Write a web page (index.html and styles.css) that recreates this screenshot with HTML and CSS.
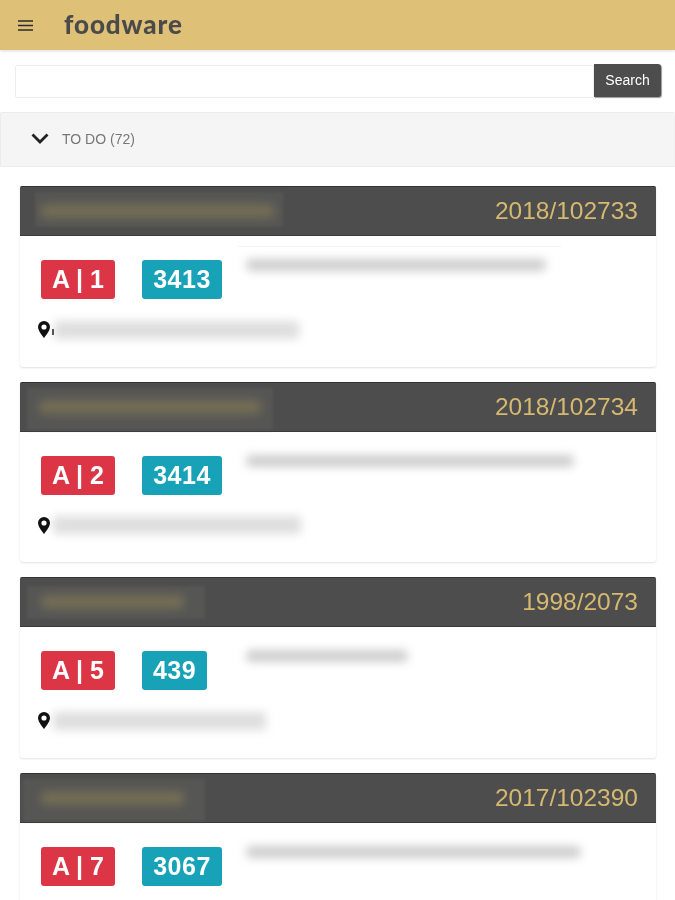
FILE: index.html
```html
<!DOCTYPE html>
<html lang="en">
<head>
    <meta charset="UTF-8">
    <meta name="viewport" content="width=device-width, initial-scale=1.0">
    <title>Foodware</title>
    <link rel="stylesheet" href="styles.css">
</head>
<body>
    <header class="topbar">
        <svg class="menu-icon" width="15" height="11" viewBox="0 0 15 11">
            <path d="M0 1h15M0 5.5h15M0 10h15" stroke="#2b2b2b" stroke-width="1.5" fill="none"/>
        </svg>
        <span class="logo soft">foodware</span>
    </header>

    <div class="search-row">
        <input class="search-input" type="text">
        <button class="search-btn"><span class="soft">Search</span></button>
    </div>

    <div class="panel-head">
        <svg class="chevron" width="18" height="11" viewBox="0 0 18 11">
            <path d="M1.5 1.5L9 9l7.5-7.5" stroke="#222" stroke-width="2.8" fill="none"/>
        </svg>
        <span class="panel-title soft">TO DO (72)</span>
    </div>

    <div class="card-list">
        <div class="card">
            <div class="card-head">
                <div class="name-box name-box-1"></div>
                <span class="name-bar name-1"></span>
                <span class="case-no soft">2018/102733</span>
            </div>
            <div class="card-body">
                <div class="badges">
                    <span class="badge badge-red"><span class="soft">A | 1</span></span>
                    <span class="badge badge-teal"><span class="soft">3413</span></span>
                </div>
                <div class="desc-box desc-box-lined"><span class="blur-bar desc-1"></span></div>
                <div class="location">
                    <svg class="pin" width="12" height="17" viewBox="0 0 12 17">
                        <path fill-rule="evenodd" d="M6 0a6 6 0 0 1 6 6c0 4-6 11-6 11S0 10 0 6a6 6 0 0 1 6-6zm0 3.4a2.6 2.6 0 1 0 0 5.2 2.6 2.6 0 0 0 0-5.2z" fill="#111"/>
                    </svg>
                    <span class="speck"></span>
                    <span class="addr addr-1"></span>
                </div>
            </div>
        </div>

        <div class="card">
            <div class="card-head">
                <div class="name-box name-box-2"></div>
                <span class="name-bar name-2"></span>
                <span class="case-no soft">2018/102734</span>
            </div>
            <div class="card-body">
                <div class="badges">
                    <span class="badge badge-red"><span class="soft">A | 2</span></span>
                    <span class="badge badge-teal"><span class="soft">3414</span></span>
                </div>
                <div class="desc-box"><span class="blur-bar desc-2"></span></div>
                <div class="location">
                    <svg class="pin" width="12" height="17" viewBox="0 0 12 17">
                        <path fill-rule="evenodd" d="M6 0a6 6 0 0 1 6 6c0 4-6 11-6 11S0 10 0 6a6 6 0 0 1 6-6zm0 3.4a2.6 2.6 0 1 0 0 5.2 2.6 2.6 0 0 0 0-5.2z" fill="#111"/>
                    </svg>
                    <span class="addr addr-2"></span>
                </div>
            </div>
        </div>

        <div class="card">
            <div class="card-head">
                <div class="name-box name-box-3"></div>
                <span class="name-bar name-3"></span>
                <span class="case-no soft">1998/2073</span>
            </div>
            <div class="card-body">
                <div class="badges">
                    <span class="badge badge-red"><span class="soft">A | 5</span></span>
                    <span class="badge badge-teal badge-short"><span class="soft">439</span></span>
                </div>
                <div class="desc-box"><span class="blur-bar desc-3"></span></div>
                <div class="location">
                    <svg class="pin" width="12" height="17" viewBox="0 0 12 17">
                        <path fill-rule="evenodd" d="M6 0a6 6 0 0 1 6 6c0 4-6 11-6 11S0 10 0 6a6 6 0 0 1 6-6zm0 3.4a2.6 2.6 0 1 0 0 5.2 2.6 2.6 0 0 0 0-5.2z" fill="#111"/>
                    </svg>
                    <span class="addr addr-3"></span>
                </div>
            </div>
        </div>

        <div class="card">
            <div class="card-head">
                <div class="name-box name-box-4"></div>
                <span class="name-bar name-4"></span>
                <span class="case-no soft">2017/102390</span>
            </div>
            <div class="card-body">
                <div class="badges">
                    <span class="badge badge-red"><span class="soft">A | 7</span></span>
                    <span class="badge badge-teal"><span class="soft">3067</span></span>
                </div>
                <div class="desc-box"><span class="blur-bar desc-4"></span></div>
            </div>
        </div>
    </div>
</body>
</html>
```

FILE: styles.css
```css
html, body {
    margin: 0;
    height: 900px;
    overflow: hidden;
    background: #fff;
}

body {
    font-family: "Liberation Sans", Arial, sans-serif;
}

/* the source picture is an upscaled thumbnail, text is a bit soft */
.soft {
    filter: blur(0.5px);
}

.topbar {
    height: 50px;
    background: #dfc077;
    display: flex;
    align-items: center;
    padding-left: 18px;
    box-shadow: 0 1px 3px rgba(0, 0, 0, 0.15);
}

.menu-icon {
    margin-right: 31px;
}

.logo {
    font-family: Lato, sans-serif;
    font-weight: 900;
    font-size: 26px;
    color: #4a4a4a;
    letter-spacing: 0.9px;
    margin-top: -2px;
}

.search-row {
    display: flex;
    padding: 14px 14px 0 15px;
    height: 33px;
}

.search-input {
    flex: 1;
    box-sizing: border-box;
    height: 33px;
    margin: 1px 0 0;
    padding: 0;
    border: 1px solid #ececec;
    border-radius: 2px 0 0 2px;
    background: #fff;
}

.search-btn {
    width: 67px;
    height: 33px;
    padding: 0 0 2px;
    border: none;
    border-radius: 0 3px 3px 0;
    background: #4d4d4d;
    color: #fff;
    font-family: inherit;
    font-size: 14px;
    box-shadow: 1px 1px 1px rgba(0, 0, 0, 0.4);
}

.panel-head {
    margin-top: 15px;
    height: 53px;
    display: flex;
    align-items: center;
    padding-left: 30px;
    background: #f5f5f5;
    border: 1px solid #ececec;
    border-right-color: #f2f2f2;
    border-radius: 2px 2px 0 0;
}

.chevron {
    margin: -2px 13px 0 0;
}

.panel-title {
    font-size: 14px;
    color: #777;
    margin-top: -2px;
}

.card-list {
    padding: 19px 19px 0 20px;
    display: flex;
    flex-direction: column;
    gap: 15px;
}

.card {
    height: 180.67px;
    flex-shrink: 0;
    background: #fff;
    border-radius: 3px;
    box-shadow: 0 1px 2px rgba(0, 0, 0, 0.12);
}

.card-head {
    position: relative;
    height: 50px;
    background: #4d4d4d;
    border-top: 1px solid #333;
    border-bottom: 1px solid #3a3a3a;
    box-sizing: border-box;
    display: flex;
    align-items: center;
    justify-content: flex-end;
    padding-right: 18px;
    border-radius: 2px 2px 0 0;
}

.case-no {
    font-size: 24.5px;
    color: #d6b970;
}

/* name strip: smeared out in the original, so no text here */
.name-box {
    position: absolute;
    background: #565655;
    filter: blur(1.5px);
}

.name-box-1 { left: 15px; top: 5px; width: 248px; height: 35px; }
.name-box-2 { left: 7px; top: 5px; width: 246px; height: 42px; }
.name-box-3 { left: 7px; top: 8px; width: 178px; height: 33px; }
.name-box-4 { left: 3px; top: 5px; width: 182px; height: 42px; }

.name-bar {
    position: absolute;
    height: 14px;
    top: 17px;
    border-radius: 7px;
    background: #746e55;
    filter: blur(5px);
}

.name-1 { left: 20px; width: 235px; }
.name-2 { left: 18px; width: 224px; }
.name-3 { left: 20px; width: 145px; }
.name-4 { left: 20px; width: 145px; }

.card-body {
    position: relative;
    padding: 24px 0 0 21px;
}

.badges {
    display: flex;
    gap: 27px;
}

.badge {
    box-sizing: border-box;
    width: 74px;
    height: 39px;
    border-radius: 3px;
    color: #fff;
    font-weight: bold;
    font-size: 25px;
    display: flex;
    align-items: center;
    justify-content: center;
}

.badge-red {
    background: #dc3545;
}

.badge-teal {
    width: 80px;
    background: #17a2b8;
    letter-spacing: 0.5px;
}

.badge-short {
    width: 65px;
}

/* blurred text that cannot be read in the original */
.blur-bar {
    display: block;
    height: 12px;
    border-radius: 5px;
    background: #cdcdcd;
    filter: blur(5px);
}

.desc-box {
    position: absolute;
    top: 10px;
    left: 218px;
    width: 323px;
    height: 40px;
    border-top: 1px solid transparent;
    box-sizing: border-box;
    padding: 12px 0 0 8px;
}

.desc-box-lined {
    border-top-color: #f3f3f3;
}

.desc-1 { width: 300px; }
.desc-2 { width: 328px; }
.desc-3 { width: 162px; }
.desc-4 { width: 335px; }

.location {
    display: flex;
    align-items: center;
    margin: 22px 0 0 -3px;
    height: 17px;
}

.pin {
    flex-shrink: 0;
    margin-right: 3px;
    position: relative;
    z-index: 1;
}

.speck {
    width: 2px;
    height: 6px;
    margin: 4px 0 0 -1px;
    background: #555;
    position: relative;
    z-index: 1;
}

.addr {
    display: block;
    height: 18px;
    border-radius: 3px;
    background: #dedede;
    filter: blur(5px);
}

.addr-1 { width: 245px; }
.addr-2 { width: 248px; }
.addr-3 { width: 213px; }
```
